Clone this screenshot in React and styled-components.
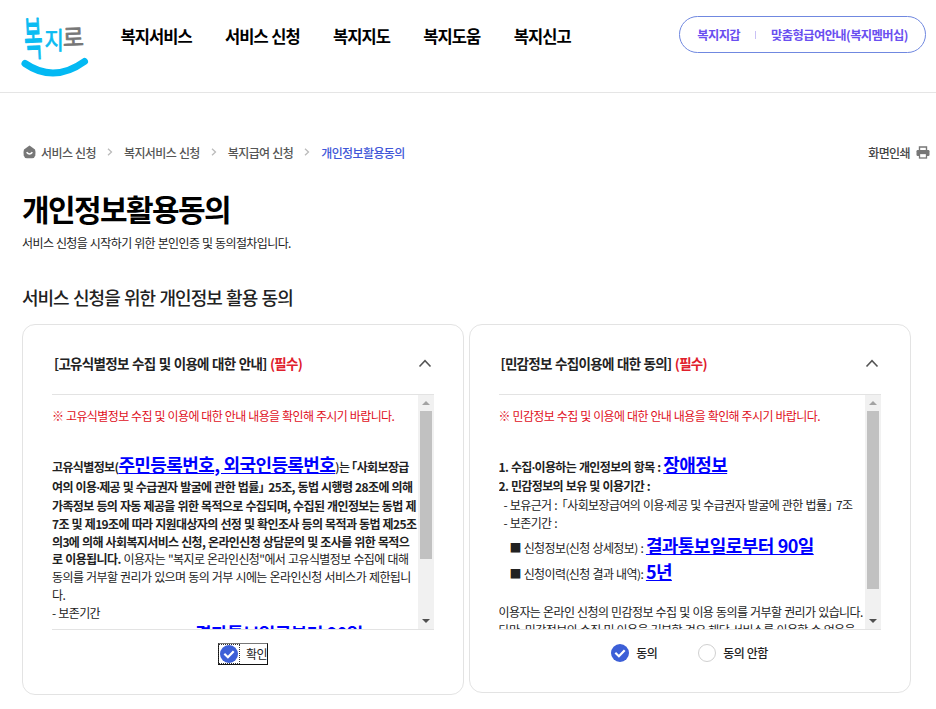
import React, { useState } from 'react';
import styled, { createGlobalStyle } from 'styled-components';

const GlobalStyle = createGlobalStyle`
  * {
    box-sizing: border-box;
  }

  body {
    margin: 0;
    background: #fff;
    color: #222;
    font-family: 'Noto Sans CJK KR', sans-serif;
    font-size: 12px;
    letter-spacing: -0.6px;
    word-spacing: 0.65px;
    overflow: hidden;
  }
`;

const Logo = () => (
  <LogoSvg viewBox="0 0 70 64" role="img" aria-label="복지로">
    <g fontWeight="400" fontSize="20" fill="#0bbcf2" stroke="#0bbcf2" strokeWidth="0.6" strokeLinejoin="round">
      <text transform="translate(5 40) rotate(-3) scale(1 2.300)">복</text>
      <text transform="translate(24.500 32.500) scale(1.050 1.200)">지</text>
      <text transform="translate(43 30.500) rotate(-2) scale(1.150 1.200)" fill="#777" stroke="#777">
        로
      </text>
    </g>
    <path d="M5 47.500Q34 67.500 64.500 45.500" fill="none" stroke="#03b9f3" strokeWidth="7" strokeLinecap="round" />
  </LogoSvg>
);

const HomeIcon = () => (
  <svg width="13" height="14" viewBox="0 0 13 14">
    <path d="M6.500 0.500 12 4.500Q13 7 12.300 10.500Q11.500 13.300 9 13.300H4Q1.500 13.300 0.700 10.500Q0 7 1 4.500Z" fill="#777" />
    <path d="M3.600 7.300Q6.500 10.700 9.400 7.300" fill="none" stroke="#fff" strokeWidth="1.500" />
  </svg>
);

const PrintIcon = () => (
  <svg width="14" height="13" viewBox="0 0 14 13">
    <path d="M3.500 4V1H10.500V4" fill="none" stroke="#777" strokeWidth="1.400" />
    <rect x="0.500" y="4" width="13" height="6" rx="1.200" fill="#777" />
    <rect x="3.500" y="7.500" width="7" height="4.500" fill="#fff" stroke="#777" strokeWidth="1.300" />
  </svg>
);

const Chevron = () => (
  <svg width="6" height="8" viewBox="0 0 6 8">
    <path d="M1 0.700 4.500 4 1 7.300" fill="none" stroke="#bbb" strokeWidth="1.300" />
  </svg>
);

const FoldIcon = () => (
  <svg width="14" height="9" viewBox="0 0 14 9">
    <path d="M1.500 7.500 7 1.700 12.500 7.500" fill="none" stroke="#555" strokeWidth="1.600" />
  </svg>
);

const Check = () => (
  <svg width="18" height="18" viewBox="0 0 18 18">
    <circle cx="9" cy="9" r="9" fill="#3c5fd7" />
    <path d="M4.300 8.800 7.900 12.200 13.700 6.200" fill="none" stroke="#fff" strokeWidth="2.200" />
  </svg>
);

const Scrollbar = ({ thumb }) => (
  <Track>
    <Arrow>
      <svg width="8" height="4" viewBox="0 0 8 4">
        <path d="M4 0 8 4H0Z" fill="#a3a3a3" />
      </svg>
    </Arrow>
    <Thumb $height={thumb} />
    <Arrow $end>
      <svg width="8" height="4" viewBox="0 0 8 4">
        <path d="M0 0H8L4 4Z" fill="#505050" />
      </svg>
    </Arrow>
  </Track>
);

const menus = ['복지서비스', '서비스 신청', '복지지도', '복지도움', '복지신고'];
const crumbs = ['서비스 신청', '복지서비스 신청', '복지급여 신청'];

const App = () => {
  const [agree, setAgree] = useState(true);

  return (
    <>
      <GlobalStyle />
      <Header>
        <Logo />
        <Nav>
          {menus.map((menu) => (
            <NavItem key={menu}>{menu}</NavItem>
          ))}
        </Nav>
        <Wallet>
          <span>복지지갑</span>
          <Bar />
          <span>맞춤형급여안내(복지멤버십)</span>
        </Wallet>
      </Header>
      <Main>
        <TopRow>
          <Breadcrumb>
            <HomeIcon />
            {crumbs.map((crumb) => (
              <React.Fragment key={crumb}>
                <Crumb>{crumb}</Crumb>
                <Chevron />
              </React.Fragment>
            ))}
            <Crumb $active>개인정보활용동의</Crumb>
          </Breadcrumb>
          <Print>
            화면인쇄
            <PrintIcon />
          </Print>
        </TopRow>
        <Title>개인정보활용동의</Title>
        <Desc>서비스 신청을 시작하기 위한 본인인증 및 동의절차입니다.</Desc>
        <SubTitle>서비스 신청을 위한 개인정보 활용 동의</SubTitle>
        <Cards>
          <Card $height={371}>
            <CardHead>
              <CardTitle>
                [고유식별정보 수집 및 이용에 대한 안내] <Required>(필수)</Required>
              </CardTitle>
              <FoldIcon />
            </CardHead>
            <ScrollBox>
              <Terms>
                <Warning>※ 고유식별정보 수집 및 이용에 대한 안내 내용을 확인해 주시기 바랍니다.</Warning>
                <Line $height={24} $bold>
                  고유식별정보(<Big>주민등록번호, 외국인등록번호</Big>
                  <Medium>)는</Medium>
                  <Open>「</Open>사회보장급
                </Line>
                <Line $height={21} $bold>
                  여의 이용<Dot>·</Dot>제공 및 수급권자 발굴에 관한 법률<Close>」</Close> 25조, 동법 시행령 28조에 의해
                </Line>
                <Line $bold>가족정보 등의 자동 제공을 위한 목적으로 수집되며, 수집된 개인정보는 동법 제</Line>
                <Line $bold>7조 및 제19조에 따라 지원대상자의 선정 및 확인조사 등의 목적과 동법 제25조</Line>
                <Line $bold>의3에 의해 사회복지서비스 신청, 온라인신청 상담문의 및 조사를 위한 목적으</Line>
                <Line>
                  <b>로 이용됩니다.</b> 이용자는 "복지로 온라인신청"에서 고유식별정보 수집에 대해
                </Line>
                <Line>동의를 거부할 권리가 있으며 동의 거부 시에는 온라인신청 서비스가 제한됩니</Line>
                <Line>다.</Line>
                <Line>- 보존기간</Line>
                <Line $height={23} $indent={143}>
                  <Big>결과통보일로부터 90일</Big>
                </Line>
              </Terms>
              <Scrollbar thumb={148} />
            </ScrollBox>
            <Confirm>
              <CheckFocus>
                <Check />
              </CheckFocus>
              <ConfirmLabel>확인</ConfirmLabel>
            </Confirm>
          </Card>
          <Card $height={369}>
            <CardHead>
              <CardTitle>
                [민감정보 수집이용에 대한 동의] <Required>(필수)</Required>
              </CardTitle>
              <FoldIcon />
            </CardHead>
            <ScrollBox>
              <Terms>
                <Warning>※ 민감정보 수집 및 이용에 대한 안내 내용을 확인해 주시기 바랍니다.</Warning>
                <Line $height={24} $bold>
                  1. 수집<Dot>·</Dot>이용하는 개인정보의 항목 : <Big>장애정보</Big>
                </Line>
                <Line $height={20} $bold>
                  2. 민감정보의 보유 및 이용기간 :
                </Line>
                <Line $height={17} $indent={5}>
                  - 보유근거 : <Open>「</Open>사회보장급여의 이용<Dot>·</Dot>제공 및 수급권자 발굴에 관한 법률<Close>」</Close> 7조
                </Line>
                <Line $height={20} $indent={5}>
                  - 보존기간 :
                </Line>
                <Line $height={25} $indent={11}>
                  ■ 신청정보(신청 상세정보) : <Big>결과통보일로부터 90일</Big>
                </Line>
                <Line $height={27} $indent={11}>
                  ■ 신청이력(신청 결과 내역): <Big>5년</Big>
                </Line>
                <Line $height={18} />
                <Line>이용자는 온라인 신청의 민감정보 수집 및 이용 동의를 거부할 권리가 있습니다.</Line>
                <Line>다만, 민감정보의 수집 및 이용을 거부할 경우 해당 서비스를 이용할 수 없음을</Line>
              </Terms>
              <Scrollbar thumb={178} />
            </ScrollBox>
            <Options>
              <Option onClick={() => setAgree(true)}>
                {agree ? <Check /> : <Empty />}
                동의
              </Option>
              <Option onClick={() => setAgree(false)}>
                {agree ? <Empty /> : <Check />}
                동의 안함
              </Option>
            </Options>
          </Card>
        </Cards>
      </Main>
    </>
  );
};

const Header = styled.header`
  display: flex;
  align-items: flex-start;
  height: 93px;
  padding: 16px 10px 0 20px;
  border-bottom: 1px solid #e5e5e5;
`;

const LogoSvg = styled.svg`
  width: 70px;
  height: 64px;
  overflow: visible;
`;

const Nav = styled.nav`
  display: flex;
  gap: 33.3px;
  margin-left: 30.5px;
  padding-top: 8px;
`;

const NavItem = styled.span`
  color: #000;
  font-size: 16.5px;
  font-weight: 700;
  letter-spacing: -0.93px;
  line-height: 24px;
  white-space: nowrap;
`;

const Wallet = styled.div`
  display: flex;
  align-items: center;
  justify-content: center;
  width: 247px;
  height: 37px;
  margin-left: auto;
  border: 1px solid #7088e0;
  border-radius: 19px;
  color: #6a4ff0;
  font-size: 12.3px;
  font-weight: 700;
  white-space: nowrap;
`;

const Bar = styled.i`
  width: 1px;
  height: 8px;
  margin: 0 15px;
  background: #c9c1f5;
`;

const Main = styled.main`
  padding: 49px 6px 0 22px;
`;

const TopRow = styled.div`
  display: flex;
  justify-content: space-between;
  height: 20px;
`;

const Breadcrumb = styled.div`
  display: flex;
  align-items: center;
  padding-left: 1px;
`;

const Crumb = styled.span`
  margin: 0 11px;
  color: ${(props) => (props.$active ? '#3f57d8' : '#555')};
  font-weight: 500;

  &:first-of-type {
    margin-left: 5px;
  }
`;

const Print = styled.div`
  display: flex;
  align-items: center;
  gap: 6px;
  color: #444;
  font-weight: 500;
`;

const Title = styled.h1`
  margin: 25px 0 0;
  color: #000;
  font-size: 30px;
  font-weight: 700;
  letter-spacing: -1.6px;
  line-height: 42px;
`;

const Desc = styled.p`
  margin: 5px 0 0;
  line-height: 18px;
  word-spacing: 0.5px;
`;

const SubTitle = styled.h2`
  margin: 32px 0 0;
  font-size: 18px;
  font-weight: 500;
  letter-spacing: -1px;
  word-spacing: 1.3px;
  line-height: 26px;
`;

const Cards = styled.div`
  display: flex;
  align-items: flex-start;
  gap: 4.5px;
  margin-top: 14px;
`;

const Card = styled.section`
  width: 442px;
  height: ${(props) => props.$height}px;
  padding: 0 29px;
  border: 1px solid #e3e3e3;
  border-radius: 13px;
`;

const CardHead = styled.div`
  display: flex;
  align-items: center;
  justify-content: space-between;
  height: 69px;
  padding: 7px 2px 0 2px;
`;

const CardTitle = styled.strong`
  padding-bottom: 1px;
  font-size: 13.5px;
  font-weight: 700;
  letter-spacing: -0.7px;
  word-spacing: 0.9px;
`;

const Required = styled.span`
  color: #e0202c;
`;

const ScrollBox = styled.div`
  display: flex;
  height: 236px;
  border-top: 1px solid #e3e3e3;
  border-bottom: 1px solid #e3e3e3;
  overflow: hidden;
`;

const Terms = styled.div`
  flex: 1;
  min-width: 0;
`;

const Warning = styled.p`
  margin: 12px 0 27px;
  color: #e0101c;
  line-height: 18px;
  white-space: nowrap;
  word-spacing: 0.45px;
`;

const Line = styled.div`
  height: ${(props) => props.$height || 17.8}px;
  padding-left: ${(props) => props.$indent || 0}px;
  font-weight: ${(props) => (props.$bold ? 700 : 400)};
  letter-spacing: ${(props) => (props.$bold ? '-0.63px' : '-0.6px')};
  line-height: ${(props) => props.$height || 17.8}px;
  white-space: pre;

  b {
    font-weight: 700;
  }
`;

const Big = styled.span`
  color: #00f;
  font-size: 18px;
  font-weight: 700;
  letter-spacing: -0.6px;
  text-decoration: underline;
`;

const Medium = styled.span`
  font-weight: 500;
`;

// punctuation that is narrower than the full-width hangul cell
const Dot = styled.span`
  font-family: 'Noto Sans', sans-serif;
  line-height: 1;
`;

const Open = styled.span`
  padding-left: 2px;
  font-feature-settings: 'halt';
`;

const Close = styled.span`
  padding-right: 1.5px;
  font-feature-settings: 'halt';
`;

const Track = styled.div`
  display: flex;
  flex-direction: column;
  width: 16px;
  background: #f1f1f1;
`;

const Arrow = styled.div`
  display: flex;
  align-items: center;
  justify-content: center;
  height: 16px;
  margin-top: ${(props) => (props.$end ? 'auto' : '0')};
`;

const Thumb = styled.div`
  width: 12px;
  height: ${(props) => props.$height}px;
  margin: 0 auto;
  background: #c1c1c1;
`;

const Confirm = styled.div`
  display: flex;
  align-items: center;
  gap: 7px;
  width: 50px;
  height: 22px;
  margin: 13px auto 0;
  border: 1px solid #111;
  border-top-color: #777;
  white-space: nowrap;
`;

const CheckFocus = styled.span`
  display: flex;
  padding: 0 1px;
  outline: 1px dotted #333;
`;

const ConfirmLabel = styled.span`
  padding-bottom: 1px;
  line-height: 18px;
`;

const Options = styled.div`
  display: flex;
  justify-content: center;
  gap: 41px;
  margin-top: 13px;
`;

const Option = styled.div`
  display: flex;
  align-items: center;
  gap: 7px;
  height: 20px;
  font-weight: 500;
  line-height: 18px;
`;

const Empty = styled.i`
  width: 18px;
  height: 18px;
  border: 1.5px solid #d0d0d0;
  border-radius: 50%;
`;

export default App;
